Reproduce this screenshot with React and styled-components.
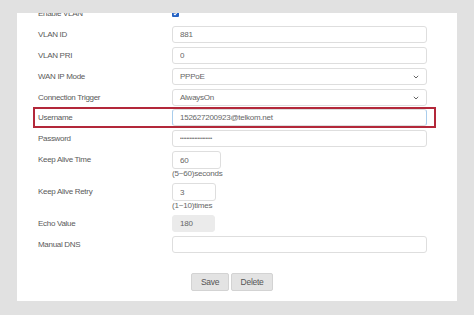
import styled, { createGlobalStyle } from "styled-components";

const GlobalStyle = createGlobalStyle`
  html, body {
    margin: 0;
    padding: 0;
    background: #e1e1e1;
  }
  body {
    font-family: "Liberation Sans", Arial, sans-serif;
  }
`;

const Page = styled.div`
  width: 474px;
  height: 315px;
  box-sizing: border-box;
  padding: 13px 17px 14px;
`;

const Panel = styled.div`
  width: 440px;
  height: 288px;
  box-sizing: border-box;
  background: #fff;
  overflow: hidden;
  padding: 0 0 0 21px;
`;

const Form = styled.div`
  width: 389px;
  margin-top: -8px;
  display: flex;
  flex-direction: column;
  gap: 4px;
`;

const Field = styled.div`
  display: grid;
  grid-template-columns: 134px 255px;
  align-items: start;
  ${({ highlighted }) =>
    highlighted &&
    `
    margin: -3px -9px -2px -5px;
    padding: 0 7px 0 3px;
    border: 2px solid #b3283a;
  `}
`;

const Label = styled.span`
  font-size: 8px;
  letter-spacing: -0.3px;
  line-height: ${({ tall }) => (tall ? "18px" : "17px")};
  color: #5a5a5a;
  white-space: nowrap;
`;

const Control = styled.div`
  display: flex;
  flex-direction: column;
  align-items: flex-start;
`;

const Input = styled.input`
  box-sizing: border-box;
  width: ${({ width }) => width || 255}px;
  height: ${({ tall }) => (tall ? 18 : 17)}px;
  margin: 0;
  padding: 0 7px;
  border: 1px solid #dedede;
  border-radius: 3px;
  background: #fff;
  font-family: "Liberation Sans", Arial, sans-serif;
  font-size: 8px;
  letter-spacing: -0.25px;
  color: #666;
  outline: none;
  ${({ focused }) =>
    focused &&
    `
    border-left-color: #a9cdec;
    border-right-color: #a9cdec;
  `}
  ${({ disabled }) =>
    disabled &&
    `
    background: #ebebeb;
    border-color: #ebebeb;
  `}
`;

const Password = styled(Input)`
  font-size: 4.6px;
  letter-spacing: 0;
`;

const SelectBox = styled.div`
  box-sizing: border-box;
  width: 255px;
  height: 17px;
  padding: 0 7px;
  border: 1px solid #dedede;
  border-radius: 3px;
  display: flex;
  align-items: center;
  justify-content: space-between;
  font-size: 8px;
  letter-spacing: -0.25px;
  color: #666;
`;

const Helper = styled.span`
  font-size: 8px;
  letter-spacing: -0.2px;
  line-height: 10px;
  color: #666;
`;

const Check = styled.span`
  margin-top: 5px;
  width: 7px;
  height: 7px;
  border-radius: 1px;
  background: #2563c4;
  display: flex;
  align-items: center;
  justify-content: center;
`;

const ButtonBar = styled.div`
  margin-top: 20px;
  padding-left: 153px;
  display: flex;
  gap: 2px;
`;

const Button = styled.button`
  box-sizing: border-box;
  width: ${({ width }) => width}px;
  height: 18px;
  padding: 0;
  border: 1px solid #d3d3d3;
  border-radius: 2px;
  background: #e3e3e3;
  font-family: "Liberation Sans", Arial, sans-serif;
  font-size: 8.5px;
  letter-spacing: -0.3px;
  color: #555;
`;

const Chevron = () => (
  <svg width="6" height="4" viewBox="0 0 6 4">
    <path d="M0.8 0.8 L3 3 L5.2 0.8" fill="none" stroke="#666" strokeWidth="1" />
  </svg>
);

const App = () => (
  <>
    <GlobalStyle />
    <Page>
      <Panel>
        <Form>
          <Field>
            <Label>Enable VLAN</Label>
            <Control>
              <Check>
                <svg width="5" height="5" viewBox="0 0 5 5">
                  <path d="M0.8 2.6 L2 3.8 L4.2 1.2" fill="none" stroke="#fff" strokeWidth="1.1" />
                </svg>
              </Check>
            </Control>
          </Field>
          <Field>
            <Label>VLAN ID</Label>
            <Input readOnly value="881" />
          </Field>
          <Field>
            <Label>VLAN PRI</Label>
            <Input readOnly value="0" />
          </Field>
          <Field>
            <Label>WAN IP Mode</Label>
            <SelectBox>
              PPPoE
              <Chevron />
            </SelectBox>
          </Field>
          <Field>
            <Label>Connection Trigger</Label>
            <SelectBox>
              AlwaysOn
              <Chevron />
            </SelectBox>
          </Field>
          <Field highlighted>
            <Label>Username</Label>
            <Input readOnly focused value="152627200923@telkom.net" />
          </Field>
          <Field>
            <Label>Password</Label>
            <Password type="password" readOnly value="12345678901234567890" />
          </Field>
          <Field>
            <Label tall>Keep Alive Time</Label>
            <Control>
              <Input readOnly tall width={49} value="60" />
              <Helper>(5~60)seconds</Helper>
            </Control>
          </Field>
          <Field>
            <Label tall>Keep Alive Retry</Label>
            <Control>
              <Input readOnly tall width={44} value="3" />
              <Helper>(1~10)times</Helper>
            </Control>
          </Field>
          <Field>
            <Label>Echo Value</Label>
            <Input disabled width={43} value="180" />
          </Field>
          <Field>
            <Label>Manual DNS</Label>
            <Input readOnly value="" />
          </Field>
        </Form>
        <ButtonBar>
          <Button width={38}>Save</Button>
          <Button width={42}>Delete</Button>
        </ButtonBar>
      </Panel>
    </Page>
  </>
);

export default App;
